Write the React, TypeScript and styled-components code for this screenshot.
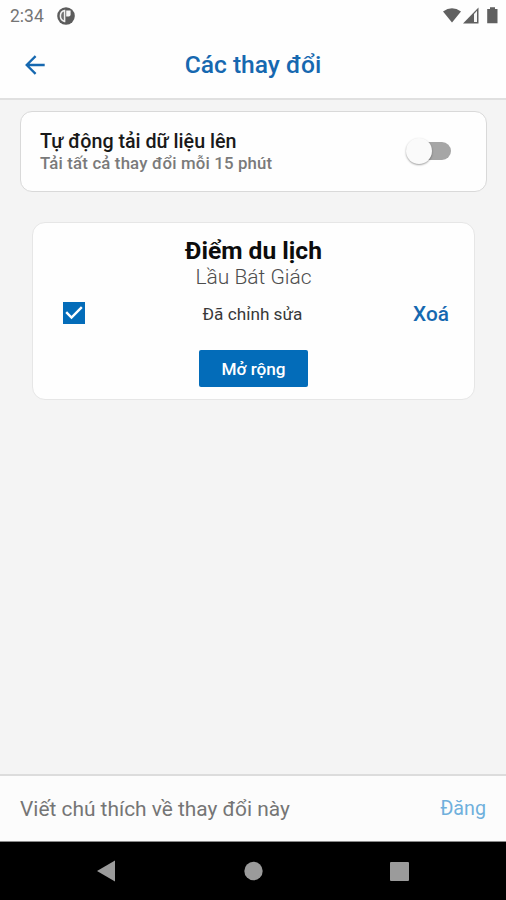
import React from 'react';
import styled, { createGlobalStyle } from 'styled-components';

const GlobalStyle = createGlobalStyle`
  * { box-sizing: border-box; }
  body { margin: 0; background: #f4f4f4; font-family: Roboto, "Noto Sans", sans-serif; }
`;

const Screen = styled.div`
  width: 506px;
  height: 900px;
  display: flex;
  flex-direction: column;
  background: #f4f4f4;
  overflow: hidden;
`;

const StatusBar = styled.div`
  height: 30px;
  display: flex;
  align-items: center;
  padding: 1px 8px 0 10px;
  background: #fefefe;
  color: #757575;
`;

const Clock = styled.span`
  width: 47px;
  font-size: 17.5px;
  line-height: 24px;
`;

const StatusIcons = styled.div`
  margin-left: auto;
  display: flex;
`;

const Header = styled.header`
  height: 70px;
  display: grid;
  grid-template-columns: 60px 1fr 60px;
  align-items: center;
  padding-top: 1px;
  background: #fefefe;
  border-bottom: 2px solid #e0e0e0;
`;

const BackButton = styled.button`
  height: 40px;
  padding: 0 0 0 24px;
  border: 0;
  background: none;
  display: flex;
  align-items: center;
`;

const Title = styled.h1`
  margin: 0;
  padding-top: 1px;
  text-align: center;
  color: #1668b0;
  font-size: 24.6px;
  font-weight: 500;
  line-height: 30px;
  white-space: nowrap;
`;

const Content = styled.main`
  flex: 1;
  padding: 11px 19px 0 20px;
`;

const SettingCard = styled.section`
  height: 81px;
  display: flex;
  align-items: center;
  justify-content: space-between;
  padding: 0 35px 0 19px;
  background: #fefefe;
  border: 1px solid #d9d9d9;
  border-radius: 12px;
`;

const SettingTitle = styled.div`
  padding-top: 2px;
  color: #191919;
  font-size: 19.7px;
  font-weight: 500;
  line-height: 22px;
  white-space: nowrap;
`;

const SettingHint = styled.div`
  color: #7a7a7a;
  font-size: 16.8px;
  font-weight: 500;
  line-height: 21px;
  letter-spacing: 0.17px;
  white-space: nowrap;
`;

const Switch = styled.button`
  width: 45px;
  height: 28px;
  margin-bottom: 1px;
  padding: 0;
  border: 0;
  background: none;
  display: flex;
  align-items: center;
`;

const Thumb = styled.span`
  width: 26px;
  height: 26px;
  flex: none;
  border-radius: 50%;
  background: #fafafa;
  box-shadow: 0 1px 2px rgba(0, 0, 0, 0.38);
  z-index: 1;
`;

const Track = styled.span`
  width: 38px;
  height: 18px;
  flex: none;
  margin-left: -19px;
  border-radius: 9px;
  background: #a6a6a6;
`;

const ChangeCard = styled.section`
  height: 178px;
  margin: 30px 12px 0;
  padding-top: 14px;
  display: flex;
  flex-direction: column;
  align-items: center;
  background: #fefefe;
  border: 1px solid #e6e6e6;
  border-radius: 13px;
`;

const FeatureType = styled.h2`
  margin: 0;
  color: #0c0c0c;
  font-size: 24.6px;
  font-weight: 700;
  line-height: 28px;
`;

const FeatureName = styled.div`
  color: #4d4d4d;
  font-size: 21px;
  font-weight: 300;
  line-height: 24px;
`;

const ChangeRow = styled.div`
  width: 100%;
  height: 48px;
  display: grid;
  grid-template-columns: 100px 1fr 100px;
  align-items: center;
  padding: 0 25px;
`;

const Checkbox = styled.span`
  width: 22px;
  height: 22px;
  margin-left: 5px;
  display: flex;
  background: #036cb9;
`;

const Status = styled.span`
  padding: 2px 2px 0 0;
  text-align: center;
  color: #383838;
  font-size: 17.2px;
  line-height: 22px;
  white-space: nowrap;
`;

const DeleteButton = styled.button`
  padding: 2px 0 0;
  border: 0;
  background: none;
  text-align: right;
  font: 500 20.8px/24px Roboto, "Noto Sans", sans-serif;
  color: #1668b0;
`;

const ExpandButton = styled.button`
  width: 109px;
  height: 37px;
  margin-top: 13px;
  padding: 0;
  border: 0;
  border-radius: 2px;
  background: #036cb9;
  color: #fff;
  font: 500 17.2px/22px Roboto, "Noto Sans", sans-serif;
`;

const CommentBar = styled.footer`
  height: 68px;
  display: flex;
  align-items: center;
  justify-content: space-between;
  padding: 0 20px;
  background: #fcfcfc;
  border-top: 2px solid #dcdcdc;
  border-bottom: 1px solid #8a8a8a;
  white-space: nowrap;
`;

const Placeholder = styled.span`
  color: #757575;
  font-size: 20.9px;
  line-height: 26px;
`;

const PostButton = styled.button`
  padding: 0;
  border: 0;
  background: none;
  color: #6fb0dc;
  font: 400 19.7px/26px Roboto, "Noto Sans", sans-serif;
`;

const NavBar = styled.nav`
  height: 58px;
  background: #000;
`;

export default function App() {
  return (
    <>
      <GlobalStyle />
      <Screen>
        <StatusBar>
          <Clock>2:34</Clock>
          <svg width="18" height="18" viewBox="0 0 18 18">
            <circle cx="9" cy="9" r="8.8" fill="#5c5c5c" />
            <path d="M7.6 3.6C4.8 4.2 3.4 6.3 3.4 9s1.5 4.8 4.2 5.4z" fill="#707070" stroke="#f0f0f0" strokeWidth="1.5" />
            <path d="M9.2 3.4h4.4v4.2a2 2 0 0 1-2 2H9.2z" fill="#f5f5f5" />
          </svg>
          <StatusIcons>
            <svg width="55" height="18" viewBox="0 0 55 18">
              <path d="M0 4.6Q9-2.2 18 4.6L9 15.5z" fill="#606060" />
              <path d="M35.5 .5V16.5H20z" fill="#606060" />
              <path d="M31 7l3-3.3V15H31z" fill="#f7f7f7" />
              <path d="M44.2 2H47V.3h5V2h2.5v14.2H44.2z" fill="#606060" />
            </svg>
          </StatusIcons>
        </StatusBar>
        <Header>
          <BackButton aria-label="Quay lại">
            <svg width="22" height="22" viewBox="0 0 22 22" fill="none" stroke="#1668b0" strokeWidth="2.3">
              <path d="M20.7 11H3.2M11.6 2.1L2.7 11l8.9 8.9" />
            </svg>
          </BackButton>
          <Title>Các thay đổi</Title>
        </Header>
        <Content>
          <SettingCard>
            <div>
              <SettingTitle>Tự động tải dữ liệu lên</SettingTitle>
              <SettingHint>Tải tất cả thay đổi mỗi 15 phút</SettingHint>
            </div>
            <Switch role="switch" aria-checked={false}>
              <Thumb />
              <Track />
            </Switch>
          </SettingCard>
          <ChangeCard>
            <FeatureType>Điểm du lịch</FeatureType>
            <FeatureName>Lầu Bát Giác</FeatureName>
            <ChangeRow>
              <Checkbox role="checkbox" aria-checked>
                <svg width="22" height="22" viewBox="0 0 22 22" fill="none" stroke="#fff" strokeWidth="2.4">
                  <path d="M3.2 10.2l5.3 5.3L18.8 5.2" />
                </svg>
              </Checkbox>
              <Status>Đã chỉnh sửa</Status>
              <DeleteButton>Xoá</DeleteButton>
            </ChangeRow>
            <ExpandButton>Mở rộng</ExpandButton>
          </ChangeCard>
        </Content>
        <CommentBar>
          <Placeholder>Viết chú thích về thay đổi này</Placeholder>
          <PostButton>Đăng</PostButton>
        </CommentBar>
        <NavBar>
          <svg width="506" height="58" viewBox="0 0 506 58" fill="#9b9b9b">
            <path d="M97 29l18-10.5v21z" />
            <circle cx="253.5" cy="29" r="9.2" />
            <rect x="390" y="20" width="19" height="19" rx="1" />
          </svg>
        </NavBar>
      </Screen>
    </>
  );
}
